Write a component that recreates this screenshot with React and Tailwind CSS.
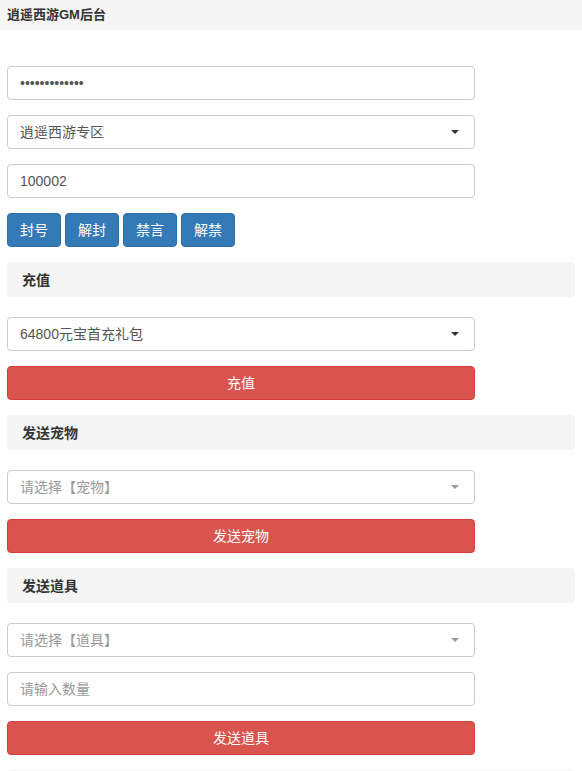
const font = { fontFamily: '"Liberation Sans", "Noto Sans CJK SC", sans-serif' }

function Caret({ muted }) {
  return (
    <svg width="8" height="4" viewBox="0 0 8 4" className="absolute right-[15px] top-[14px]">
      <path d="M0 0h8L4 4z" fill={muted ? "#999" : "#333"} />
    </svg>
  )
}

function Field({ children, muted, select }) {
  return (
    <div
      className={`relative flex h-[34px] w-[468px] items-center rounded-[4px] border border-[#ccc] bg-white pl-3 text-sm ${
        muted ? "text-[#999]" : "text-[#555]"
      }`}
    >
      {children}
      {select && <Caret muted={muted} />}
    </div>
  )
}

function SectionHead({ title }) {
  return (
    <div className="flex h-[35px] w-[568px] items-center rounded-[4px] bg-[#f5f5f5] pl-[15px] text-sm font-bold text-[#333]">
      {title}
    </div>
  )
}

function DangerBtn({ label }) {
  return (
    <div className="flex h-[34px] w-[468px] items-center justify-center rounded-[4px] border border-[#d43f3a] bg-[#d9534f] text-sm text-white">
      {label}
    </div>
  )
}

export default function App() {
  return (
    <div className="h-[771px] overflow-hidden bg-white" style={font}>
      <div className="flex h-[30px] items-center bg-[#f5f5f5] pl-[7px] text-[13px] font-bold text-[#333]">
        逍遥西游GM后台
      </div>

      <div className="flex flex-col px-[7px] pt-[36px]">
        <div className="flex flex-col gap-[15px]">
          <Field>
            <span className="text-[#555]">•••••••••••••</span>
          </Field>
          <Field select>逍遥西游专区</Field>
          <Field>100002</Field>
          <div className="flex gap-[4px]">
            {["封号", "解封", "禁言", "解禁"].map((t) => (
              <div
                key={t}
                className="flex h-[34px] w-[54px] items-center justify-center rounded-[4px] border border-[#2e6da4] bg-[#337ab7] text-sm text-white"
              >
                {t}
              </div>
            ))}
          </div>
        </div>

        <div className="mt-[15px]">
          <SectionHead title="充值" />
        </div>
        <div className="mt-[20px] flex flex-col gap-[15px]">
          <Field select>64800元宝首充礼包</Field>
          <DangerBtn label="充值" />
        </div>

        <div className="mt-[15px]">
          <SectionHead title="发送宠物" />
        </div>
        <div className="mt-[20px] flex flex-col gap-[15px]">
          <Field select muted>请选择【宠物】</Field>
          <DangerBtn label="发送宠物" />
        </div>

        <div className="mt-[15px]">
          <SectionHead title="发送道具" />
        </div>
        <div className="mt-[20px] flex flex-col gap-[15px]">
          <Field select muted>请选择【道具】</Field>
          <Field muted>请输入数量</Field>
          <DangerBtn label="发送道具" />
        </div>

        <div className="mt-[15px] h-[35px] w-[568px] rounded-[4px] bg-[#f5f5f5]" />
      </div>
    </div>
  )
}
